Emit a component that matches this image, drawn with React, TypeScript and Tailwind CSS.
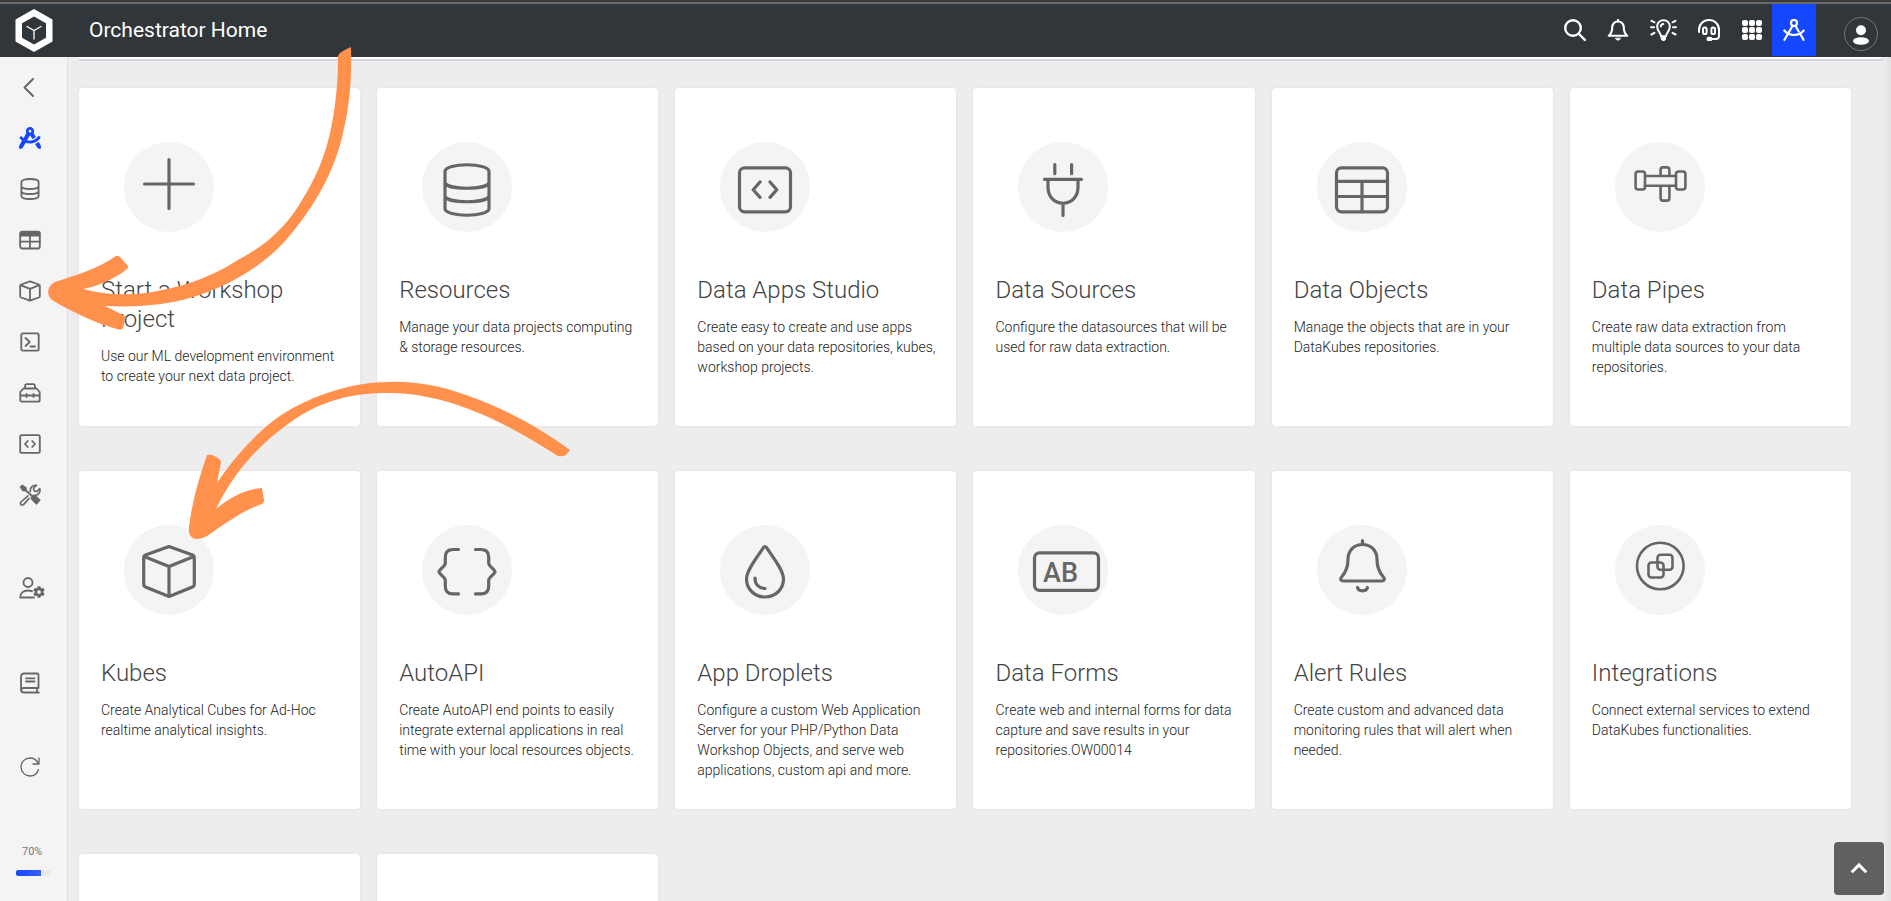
import React from "react";
import { FaCog, FaDraftingCompass } from "react-icons/fa";

type IconProps = { children: React.ReactNode; className?: string; width?: number };

function Glyph({ children, className = "size-[22px]", width = 1.8 }: IconProps) {
  return (
    <svg
      viewBox="0 0 22 22"
      className={className}
      fill="none"
      stroke="currentColor"
      strokeWidth={width}
      strokeLinecap="round"
      strokeLinejoin="round"
      aria-hidden="true"
    >
      {children}
    </svg>
  );
}

const sideItems: { label: string; icon: React.ReactNode }[] = [
  {
    label: "Collapse",
    icon: (
      <Glyph width={2}>
        <path d="M14 3 5.500 11.500l8.500 8.500" />
      </Glyph>
    ),
  },
  { label: "Workshop", icon: <FaDraftingCompass className="size-[22px] text-[#1447ff]" /> },
  {
    label: "Resources",
    icon: (
      <Glyph>
        <path d="M2.400 4c0-4 17.200-4 17.200 0v14c0 4-17.200 4-17.200 0ZM2.400 8c0 4 17.200 4 17.200 0M2.400 13c0 4 17.200 4 17.200 0" />
      </Glyph>
    ),
  },
  {
    label: "Data objects",
    icon: (
      <Glyph>
        <rect x="1.200" y="2.700" width="19.600" height="16.800" rx="2" />
        <path d="M1.200 12.700h19.600M11 6v13.500" />
        <path d="M1.500 3.500h19v3.200h-19z" fill="currentColor" />
      </Glyph>
    ),
  },
  {
    label: "Kubes",
    icon: (
      <Glyph>
        <path d="M11 1.400 19.800 4.500c.7.3 1 .7 1 1.300v10.400c0 .6-.3 1-1 1.300L11 20.600 2.200 17.500c-.7-.3-1-.7-1-1.300V5.800c0-.6.3-1 1-1.300ZM1.600 5.200 11 8.800l9.400-3.600M11 8.800v11.800" />
      </Glyph>
    ),
  },
  {
    label: "Terminal",
    icon: (
      <Glyph>
        <rect x="2.300" y="2.300" width="17.400" height="17.400" rx="1.600" />
        <path d="M6.500 7l4.200 4-4.200 4M11.500 15.500h4.500" />
      </Glyph>
    ),
  },
  {
    label: "Toolbox",
    icon: (
      <Glyph>
        <path d="M6 6.500V4.200C6 3 6.800 2.200 8 2.200h6c1.200 0 2 .8 2 2v2.300M4.500 6.500h13L20.700 10v8c0 1-.7 1.700-1.700 1.700H3c-1 0-1.700-.7-1.700-1.700v-8L4.500 6.500ZM1.500 13.500h19M7.500 12v3M14.500 12v3" />
      </Glyph>
    ),
  },
  {
    label: "Data apps",
    icon: (
      <Glyph>
        <rect x="1.200" y="2.200" width="19.600" height="17.600" rx="1.600" />
        <path d="M8.800 8 6 11l2.800 3M13.200 8l2.800 3-2.800 3" />
      </Glyph>
    ),
  },
  {
    label: "Tools",
    icon: (
      <Glyph width={1.6}>
        <path d="M1.200 2.700 3.200.9l4 2.600v2.300l6 5.600c1.600-.8 2.800-.5 3.800.5l4.300 4.200-3.800 4.400-4.600-4.600c-1-1-1.200-2.300-.4-3.600L6.300 7H4Z" fill="currentColor" strokeWidth=".8" />
        <path d="M11.300 7.600C10.800 4 13.500.8 17.500 1.300l-3 3 .6 2.600 2.700.7 3-3c.8 3-1 6.500-4.300 6.700M9 11.800l-7 6.200c-1.600 2 .8 4 2.500 2.600l5.500-6" />
      </Glyph>
    ),
  },
];

const cardIcons = {
  plus: <path d="M20.500 42h49M45 17.500v49" />,
  database: (
    <path d="M23 29.500c0-9 44-9 44 0v37c0 9-44 9-44 0ZM23 41c3 7 41 7 44 0M23 54.500c3 7 41 7 44 0" />
  ),
  code: (
    <>
      <rect x="19.500" y="25.800" width="51" height="44" rx="5" />
      <path d="m40 40-6.800 7.700L40 55.400M50 40l6.800 7.700L50 55.400" />
    </>
  ),
  plug: (
    <path d="M36.800 22.500v9.200M53.600 22.500v9.200M26.500 37.300h37M30 37.300v8c0 9 6 16 15 16s15-7 15-16v-8M45 61.500v12" />
  ),
  table: (
    <>
      <rect x="19.500" y="25.800" width="51" height="44" rx="5" />
      <path d="M19.500 39.300h51M19.500 54.500h51M45 39.300v30.500" />
    </>
  ),
  pipes: (
    <g strokeWidth="2.600">
      <rect x="20.600" y="29.500" width="9.400" height="18" rx="2.500" />
      <rect x="61" y="29.500" width="9.400" height="18" rx="2.500" />
      <path d="M30 34h31M30 43.800h31M45.600 34v-6c0-1.600.8-2.600 2.400-2.600h4c1.600 0 2.400 1 2.400 2.600v6M45.600 44v12c0 1.600.8 2.600 2.400 2.600h4c1.600 0 2.400-1 2.400-2.600V44" />
    </g>
  ),
  kube: (
    <path d="M45 21.500 68.500 30c1.200.5 1.800 1.200 1.800 2.500v27c0 1.300-.6 2-1.800 2.500L45 71.500 21.500 62c-1.200-.5-1.800-1.200-1.800-2.500v-27c0-1.300.6-2 1.800-2.500ZM20.200 31.500 45 41.500l24.800-10M45 41.500v30" />
  ),
  braces: (
    <path d="M36.500 24.500H31c-5 0-7.700 2.700-7.700 7.700v6c0 3-6.300 6.300-6.300 8.500s6.300 5.500 6.300 8.500v6c0 5 2.700 7.700 7.700 7.700h5.500M53.500 24.500H59c5 0 7.700 2.700 7.700 7.700v6c0 3 6.300 6.300 6.300 8.500s-6.300 5.500-6.300 8.500v6c0 5-2.700 7.700-7.700 7.700h-5.500" />
  ),
  drop: (
    <path d="M43.500 22.500c.8-1.200 2.200-1.200 3 0C53 32.500 63.500 45 63.500 54c0 10-8 18-18.500 18s-18.500-8-18.500-18c0-9 10.500-21.500 17-31.500ZM35 53c0 6 3.500 10.300 10 10.500" />
  ),
  form: (
    <>
      <rect x="16.500" y="27.800" width="64" height="37.500" rx="5" />
      <text x="25" y="56.500" fill="currentColor" stroke="none" fontSize="27" className="font-['Roboto',sans-serif] font-medium">
        AB
      </text>
    </>
  ),
  bell: (
    <path d="M45.500 15.500v4M45.500 19.500c-8.500 0-14.500 6-14.500 15 0 7-1.300 11.500-6 17-2.500 3-1 4.500 1.500 4.500h38c2.500 0 4-1.500 1.500-4.500-4.700-5.500-6-10-6-17 0-9-6-15-14.500-15ZM40.500 62.500c1 4.500 9 4.500 10 0" />
  ),
  integrations: (
    <g strokeWidth="2.600">
      <circle cx="45.300" cy="41" r="23.300" />
      <rect x="33.500" y="37.500" width="15" height="15" rx="3" />
      <rect x="42.500" y="29.800" width="15" height="15" rx="3" />
    </g>
  ),
};

type Card = { title: string; text: string; icon: keyof typeof cardIcons };

const cards: Card[] = [
  { title: "Start a Workshop Project", text: "Use our ML development environment to create your next data project.", icon: "plus" },
  { title: "Resources", text: "Manage your data projects computing & storage resources.", icon: "database" },
  { title: "Data Apps Studio", text: "Create easy to create and use apps based on your data repositories, kubes, workshop projects.", icon: "code" },
  { title: "Data Sources", text: "Configure the datasources that will be used for raw data extraction.", icon: "plug" },
  { title: "Data Objects", text: "Manage the objects that are in your DataKubes repositories.", icon: "table" },
  { title: "Data Pipes", text: "Create raw data extraction from multiple data sources to your data repositories.", icon: "pipes" },
  { title: "Kubes", text: "Create Analytical Cubes for Ad-Hoc realtime analytical insights.", icon: "kube" },
  { title: "AutoAPI", text: "Create AutoAPI end points to easily integrate external applications in real time with your local resources objects.", icon: "braces" },
  { title: "App Droplets", text: "Configure a custom Web Application Server for your PHP/Python Data Workshop Objects, and serve web applications, custom api and more.", icon: "drop" },
  { title: "Data Forms", text: "Create web and internal forms for data capture and save results in your repositories.OW00014", icon: "form" },
  { title: "Alert Rules", text: "Create custom and advanced data monitoring rules that will alert when needed.", icon: "bell" },
  { title: "Integrations", text: "Connect external services to extend DataKubes functionalities.", icon: "integrations" },
];

const cardBox = "min-h-[338px] rounded bg-white shadow-[0_0_3px_rgba(0,0,0,0.06)]";

function CardTile({ title, text, icon }: Card) {
  return (
    <a href="#" className={`${cardBox} block pt-[54px] pb-6`}>
      <svg
        viewBox="0 0 90 90"
        className="ml-[45px] size-[90px] rounded-full bg-[#f4f4f4] text-[#666]"
        fill="none"
        stroke="currentColor"
        strokeWidth="3.200"
        strokeLinecap="round"
        strokeLinejoin="round"
        aria-hidden="true"
      >
        {cardIcons[icon]}
      </svg>
      <div className="mt-11 pr-5 pl-[22px]">
        <h2 className="max-w-[220px] text-2xl leading-[29px] font-light text-[#444]">{title}</h2>
        <p className="mt-3 text-sm leading-5 font-light text-[#222]">{text}</p>
      </div>
    </a>
  );
}

function Header() {
  const button = "flex h-[52px] items-center justify-center";
  return (
    <header className="flex h-[57px] shrink-0 items-start border-t-2 border-[#3a3a3a] bg-[#31363a] text-white">
      <div className="flex h-[55px] w-full border-t-2 border-[#6a6a6a]">
        <a href="#" aria-label="Home" className="flex w-[67px] items-center justify-center">
          <svg viewBox="0 0 38 43" className="h-[43px] w-[38px]" aria-hidden="true">
            <path d="M19 0 37.500 10.500v22L19 43 .5 32.500v-22Z" fill="#fff" />
            <path d="M19 7.500 31 14.300v14.400L19 35.500 7 28.700V14.300Z" fill="#31363a" />
            <path d="m12 17.500 7 4 7-4M19 21.500v8.500" fill="none" stroke="#fff" strokeWidth="1.300" strokeLinecap="round" />
          </svg>
        </a>
        <h1 className="flex grow items-center pl-[22px] text-[21px]">Orchestrator Home</h1>
        <div className="flex items-start">
          <button aria-label="Search" className={`${button} w-[42px]`}>
            <Glyph width={2.4}>
              <circle cx="9" cy="9" r="7.800" />
              <path d="m15 15 5.800 5.800" />
            </Glyph>
          </button>
          <button aria-label="Notifications" className={`${button} w-[44px]`}>
            <Glyph width={2.1}>
              <path d="M11 1v1.500M11 2.500c-3.600 0-5.800 2.600-5.800 6 0 4-.9 5.900-3.400 8.300h18.400c-2.500-2.400-3.400-4.300-3.400-8.300 0-3.400-2.200-6-5.800-6Z" />
              <path d="M8.500 19.500c.8 2.200 4.200 2.200 5 0Z" fill="currentColor" strokeWidth=".8" />
            </Glyph>
          </button>
          <button aria-label="Tips" className={`${button} w-[46px]`}>
            <svg viewBox="0 0 27 22" className="h-[22px] w-[27px]" fill="none" stroke="currentColor" strokeWidth="2" strokeLinecap="round" strokeLinejoin="round" aria-hidden="true">
              <path d="M11 17.300c0-3.500-3.800-4.800-3.800-9.500 0-4 2.700-6.500 6.300-6.500s6.300 2.500 6.300 6.500c0 4.700-3.800 6-3.800 9.500ZM10.800 7.500c0-1.500 1-2.500 2.500-2.500M1.500 1.800l3 1.500M25.500 1.800l-3 1.500M1 8.300h3M26 8.300h-3M1.500 15.500l3-1.600M25.500 15.500l-3-1.600" />
              <path d="M11.500 18h4v2.500l-1 1h-2l-1-1Z" fill="currentColor" strokeWidth="1" />
            </svg>
          </button>
          <button aria-label="Support" className={`${button} w-[46px]`}>
            <Glyph width={2}>
              <path d="M1 13v-2C1 5 5.500 1 11 1s10 4 10 10v6c0 1.800-1 3-3 3h-7" />
              <rect x="5" y="8.500" width="3.600" height="6.500" rx="1.600" />
              <rect x="13.400" y="8.500" width="3.600" height="6.500" rx="1.600" />
              <rect x="9.500" y="18.800" width="4" height="2.400" rx="1.200" fill="currentColor" />
            </Glyph>
          </button>
          <button aria-label="Apps" className={`${button} w-10`}>
            <span className="grid grid-cols-3 gap-px">
              {Array.from({ length: 9 }, (_, i) => (
                <span key={i} className="size-[6px] rounded-[2px] bg-white" />
              ))}
            </span>
          </button>
          <button aria-label="Workshop" className={`${button} w-11 bg-[#1447ff]`}>
            <Glyph width={2.2}>
              <circle cx="11" cy="4" r="3" />
              <path d="M9.600 6.800 1.500 20.800M12.400 6.800l3.200 5.500M18 16.300l2.500 4.500M1.300 11.500c5 6 14.400 6 19.400 0" />
            </Glyph>
          </button>
          <button aria-label="Account" className="mt-[13px] mr-[13px] ml-7 flex size-[34px] items-center justify-center rounded-full border border-[#72777a]">
            <svg viewBox="0 0 16 20" className="mt-[2px] h-5 w-4" fill="currentColor" aria-hidden="true">
              <circle cx="8" cy="5.200" r="5" />
              <ellipse cx="8" cy="16" rx="8" ry="3.800" />
            </svg>
          </button>
        </div>
      </div>
    </header>
  );
}

function Sidebar() {
  const row = "flex w-full items-center pl-[19px]";
  return (
    <nav className="flex w-[68px] shrink-0 flex-col border-r border-[#dedede] bg-[#f4f4f4] pt-1 text-[#666]">
      {sideItems.map((item) => (
        <button key={item.label} aria-label={item.label} className={`${row} h-[51px]`}>
          {item.icon}
        </button>
      ))}
      <button aria-label="User settings" className={`${row} mt-[42px] h-[51px]`}>
        <Glyph width={1.8}>
          <circle cx="9" cy="5.500" r="4.500" />
          <path d="M15 20.500H1.200c-.2-4.500 3-7 7.800-7 1.500 0 2.800.2 4 .7" />
        </Glyph>
        <FaCog className="-ml-2 mt-2 size-3" />
      </button>
      <button aria-label="Documentation" className={`${row} mt-11 h-[51px]`}>
        <Glyph>
          <path d="M19.500 16V2.800c0-.8-.5-1.300-1.300-1.300H5c-1.800 0-3 1.200-3 3v13c0 1.800 1.200 3 3 3h14.800M2 18c.2-1.300 1.300-2 3-2h14.500M18 16v4.500M7 6.300h8.500M7 9.500h8.500" />
        </Glyph>
      </button>
      <button aria-label="Refresh" className={`${row} mt-[33px] h-[51px]`}>
        <Glyph width={1.300}>
          <path d="M19.500 13.500C18.300 17.400 15 20 11 20c-5 0-9-4-9-9s4-9 9-9c3.700 0 6.800 2.200 8.300 5.500M20 2v6h-6" />
        </Glyph>
      </button>
      <div className="mt-[50px] flex flex-col pl-4">
        <label htmlFor="usage" className="pl-[6px] text-[11px] leading-5 text-[#777]">
          70%
        </label>
        <progress
          id="usage"
          max={100}
          value={70}
          className="mt-2 h-[6px] w-[35px] appearance-none overflow-hidden rounded-sm [&::-webkit-progress-bar]:bg-[#e9e9e9] [&::-webkit-progress-value]:bg-linear-to-r [&::-webkit-progress-value]:from-[#1447ff] [&::-webkit-progress-value]:to-[#3560ff]"
        />
      </div>
    </nav>
  );
}

function Arrows() {
  return (
    <svg viewBox="0 0 600 560" className="pointer-events-none absolute top-0 left-0 h-[560px] w-[600px]" fill="#ff914d" aria-hidden="true">
      <path d="M351 47C352 75 350 105 343 133C335 170 315 207 286 240C268 260 245 276 220 287C185 303 148 308 105 306L123 315Q127 317 125 320L123 328Q121 331 117 329C95 323 72 312 52 300C46 295 47 286 55 282C76 275 98 269 116 256Q118 255 120 257L128 266Q129 268 127 269C113 280 98 286 83 289C108 296 139 296 167 289C190 284 212 276 233 263C248 254 260 248 272 237C284 226 294 214 302 200C315 180 325 156 330 133C336 107 338 80 338 56Q339 52 351 47Z" />
      <path d="M570 450C545 431 505 408 466 395C440 386 415 381 389 382C355 382 321 393 293 408C276 417 264 428 252 440C240 452 229 465 217 483L221 462Q221 460 218 458C214 455 210 454 207 455C199 478 192 502 189 527C188 534 191 539 197 539Q202 539 207 536C226 523 242 511 262 504Q264 503 264 500L262 488C243 490 230 498 216 509C230 480 248 458 268 440C278 431 293 420 303 414C328 400 352 393 389 393C415 393 442 399 466 408C501 421 530 438 558 456Q562 457 566 455Z" />
    </svg>
  );
}

export default function App() {
  return (
    <div className="relative flex h-screen flex-col overflow-hidden bg-[#ededed] font-['Roboto',sans-serif]">
      <Header />
      <div className="flex min-h-0 grow">
        <Sidebar />
        <main className="min-w-0 grow overflow-hidden pl-[11px] shadow-[inset_-10px_0_8px_-8px_rgba(0,0,0,0.07)]">
          <div className="mr-2 h-1 border-r border-b-2 border-[#d8d6de] bg-white" />
          <div className="mt-[27px] mr-10 grid grid-cols-6 gap-x-[17px] gap-y-[45px]">
            {cards.map((card) => (
              <CardTile key={card.title} {...card} />
            ))}
            <div className={cardBox} />
            <div className={cardBox} />
          </div>
        </main>
      </div>
      <button aria-label="Back to top" className="absolute right-[7px] bottom-[6px] flex h-[53px] w-[50px] items-center justify-center rounded bg-[#606060] text-white">
        <Glyph width={3.200} className="size-5">
          <path d="m3 14.500 8-8 8 8" strokeLinecap="butt" strokeLinejoin="miter" />
        </Glyph>
      </button>
      <Arrows />
    </div>
  );
}
